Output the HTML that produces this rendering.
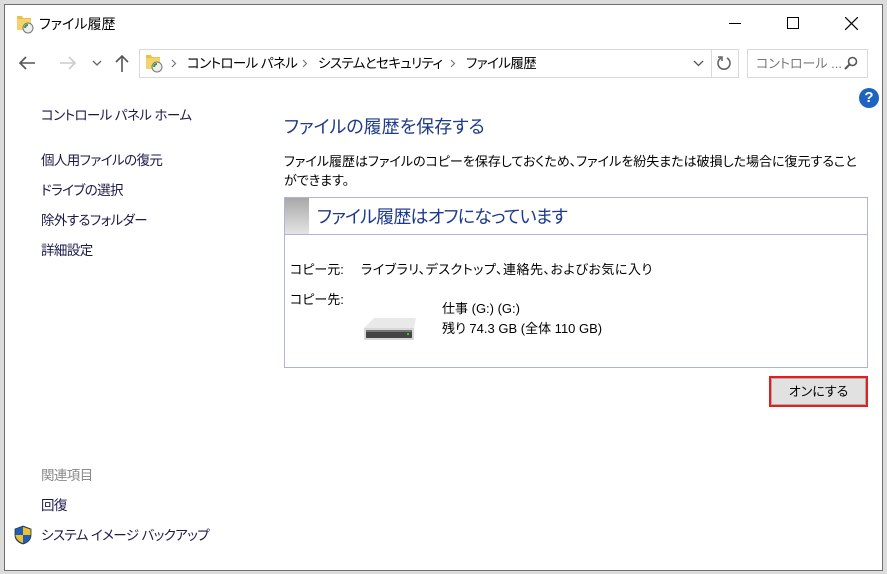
<!DOCTYPE html>
<html><head><meta charset="utf-8"><style>
*{margin:0;padding:0;box-sizing:border-box}
body{width:887px;height:574px;background:#dcdcdc;position:relative;overflow:hidden;font-family:"Liberation Sans","Noto Sans CJK JP",sans-serif;font-size:13px;color:#000;font-feature-settings:"palt";line-height:1.2}
.win{position:absolute;left:4px;top:4px;width:879px;height:567px;background:#fff;border:1px solid #707070}
.a{position:absolute;white-space:nowrap}
.lnk{color:#1a1a4a;font-size:13.5px;letter-spacing:-0.6px}
.bc{font-size:13.5px;letter-spacing:-0.6px}
</style></head><body>
<div class="win"></div>
<!-- title -->
<svg class="a" style="left:16px;top:14px" width="20" height="20" viewBox="0 0 20 20"><path d="M1 2h5l1 2h8v12H1z" fill="#e8c04a"/><path d="M1 5h14v11H1z" fill="#f5d36a"/><circle cx="12" cy="14" r="5" fill="#eee" stroke="#777"/><path d="M9 14a3 3 0 0 1 3-3" stroke="#2a9a3a" stroke-width="2" fill="none"/></svg>
<div class="a" style="left:39px;top:16px;font-size:14px">ファイル履歴</div>
<div class="a" style="left:729px;top:23px;width:12px;height:1px;background:#000"></div>
<div class="a" style="left:787px;top:17px;width:12px;height:12px;border:1px solid #000"></div>
<svg class="a" style="left:845px;top:17px" width="13" height="13"><path d="M0 0L13 13M13 0L0 13" stroke="#000" stroke-width="1.2"/></svg>
<!-- nav -->
<svg class="a" style="left:18px;top:55px" width="18" height="16"><path d="M17 8H2M8 2L2 8l6 6" stroke="#555" stroke-width="1.6" fill="none"/></svg>
<svg class="a" style="left:59px;top:55px" width="18" height="16"><path d="M1 8h15M10 2l6 6-6 6" stroke="#ccc" stroke-width="1.6" fill="none"/></svg>
<svg class="a" style="left:92px;top:60px" width="10" height="7"><path d="M1 1l4 4 4-4" stroke="#666" stroke-width="1.3" fill="none"/></svg>
<svg class="a" style="left:114px;top:54px" width="16" height="19"><path d="M8 18V2M2 8l6-6 6 6" stroke="#555" stroke-width="1.6" fill="none"/></svg>
<div class="a" style="left:139px;top:49px;width:600px;height:29px;border:1px solid #d9d9d9"></div>
<div class="a" style="left:711px;top:49px;width:1px;height:29px;background:#d9d9d9"></div>
<svg class="a" style="left:145px;top:53px" width="20" height="20" viewBox="0 0 20 20"><path d="M1 2h5l1 2h8v12H1z" fill="#e8c04a"/><path d="M1 5h14v11H1z" fill="#f5d36a"/><circle cx="12" cy="14" r="5" fill="#eee" stroke="#777"/><path d="M9 14a3 3 0 0 1 3-3" stroke="#2a9a3a" stroke-width="2" fill="none"/></svg>
<svg class="a" style="left:171px;top:59px" width="6" height="9"><path d="M1 1l3.5 3.5L1 8" stroke="#777" stroke-width="1.2" fill="none"/></svg>
<div class="a bc" style="left:187px;top:56px">コントロール パネル</div>
<svg class="a" style="left:302px;top:59px" width="6" height="9"><path d="M1 1l3.5 3.5L1 8" stroke="#777" stroke-width="1.2" fill="none"/></svg>
<div class="a bc" style="left:318px;top:56px">システムとセキュリティ</div>
<svg class="a" style="left:450px;top:59px" width="6" height="9"><path d="M1 1l3.5 3.5L1 8" stroke="#777" stroke-width="1.2" fill="none"/></svg>
<div class="a bc" style="left:466px;top:56px">ファイル履歴</div>
<svg class="a" style="left:693px;top:60px" width="11" height="7"><path d="M1 1l4.5 4.5L10 1" stroke="#555" stroke-width="1.3" fill="none"/></svg>
<svg class="a" style="left:716px;top:55px" width="16" height="16"><path d="M11 3a6 6 0 1 1-6 0" stroke="#666" stroke-width="1.6" fill="none"/><path d="M2 2h4v4" stroke="#666" stroke-width="1.6" fill="none"/></svg>
<div class="a" style="left:747px;top:49px;width:121px;height:29px;border:1px solid #d9d9d9"></div>
<div class="a" style="left:756px;top:56px;color:#777;font-size:13px">コントロール ...</div>
<svg class="a" style="left:844px;top:56px" width="14" height="14"><circle cx="8.5" cy="5.5" r="4" stroke="#555" stroke-width="1.6" fill="none"/><path d="M6 8L1 13" stroke="#555" stroke-width="2"/></svg>
<div class="a" style="left:859px;top:88px;width:20px;height:20px;border-radius:50%;background:#1f63c0;color:#fff;font-weight:bold;font-size:15px;text-align:center;line-height:20px">?</div>
<!-- left -->
<div class="a lnk" style="left:41px;top:108px">コントロール パネル ホーム</div>
<div class="a lnk" style="left:41px;top:153px">個人用ファイルの復元</div>
<div class="a lnk" style="left:41px;top:183px">ドライブの選択</div>
<div class="a lnk" style="left:41px;top:213px">除外するフォルダー</div>
<div class="a lnk" style="left:41px;top:243px">詳細設定</div>
<div class="a lnk" style="left:41px;top:468px;color:#8a8a8a">関連項目</div>
<div class="a lnk" style="left:41px;top:498px">回復</div>
<svg class="a" style="left:13px;top:525px" width="20" height="20" viewBox="0 0 20 20"><path d="M10 1L18 4v6c0 5-4 8-8 9-4-1-8-4-8-9V4z" fill="#1c5fb8" stroke="#333" stroke-width=".8"/><path d="M10 2v8h7.5V4.5z" fill="#f4c02a"/><path d="M10 10H2.5c.5 4 4 7 7.5 8z" fill="#f4c02a"/></svg>
<div class="a lnk" style="left:41px;top:528px">システム イメージ バックアップ</div>
<!-- main -->
<div class="a" style="left:284px;top:117px;font-size:18px;color:#1e3a8a">ファイルの履歴を保存する</div>
<div class="a" style="left:284px;top:152px;font-size:13px;line-height:19px;white-space:normal;width:580px">ファイル履歴はファイルのコピーを保存しておくため、ファイルを紛失または破損した場合に復元することができます。</div>
<div class="a" style="left:284px;top:197px;width:584px;height:171px;border:1px solid #aeb3d9"></div>
<div class="a" style="left:285px;top:234px;width:582px;height:1px;background:#aeb3d9"></div>
<div class="a" style="left:285px;top:198px;width:24px;height:36px;background:linear-gradient(#a8a8a8,#e4e4e4)"></div>
<div class="a" style="left:317px;top:207px;font-size:18px;color:#1e3a8a;letter-spacing:-0.8px">ファイル履歴はオフになっています</div>
<div class="a" style="left:290px;top:262px">コピー元:</div>
<div class="a" style="left:361px;top:262px;letter-spacing:0.5px">ライブラリ、デスクトップ、連絡先、およびお気に入り</div>
<div class="a" style="left:290px;top:292px">コピー先:</div>
<svg class="a" style="left:362px;top:316px" width="56" height="28"><path d="M2 12L12 2h42l-2 10z" fill="#e9e9e9"/><path d="M2 12h50v12H2z" fill="#d8d8d8"/><path d="M4 14h46v8H4z" fill="#444"/><path d="M4 14h46v2H4z" fill="#777"/><rect x="45" y="17" width="2" height="2" fill="#3c3"/></svg>
<div class="a" style="left:442px;top:301px">仕事 (G:) (G:)</div>
<div class="a" style="left:442px;top:321px">残り 74.3 GB (全体 110 GB)</div>
<div class="a" style="left:769px;top:376px;width:99px;height:31px;border:2px solid #e81c1c;background:#e1e1e1"></div>
<div class="a" style="left:771px;top:378px;width:95px;height:27px;border:1px solid #adadad;text-align:center;line-height:25px">オンにする</div>
</body></html>
